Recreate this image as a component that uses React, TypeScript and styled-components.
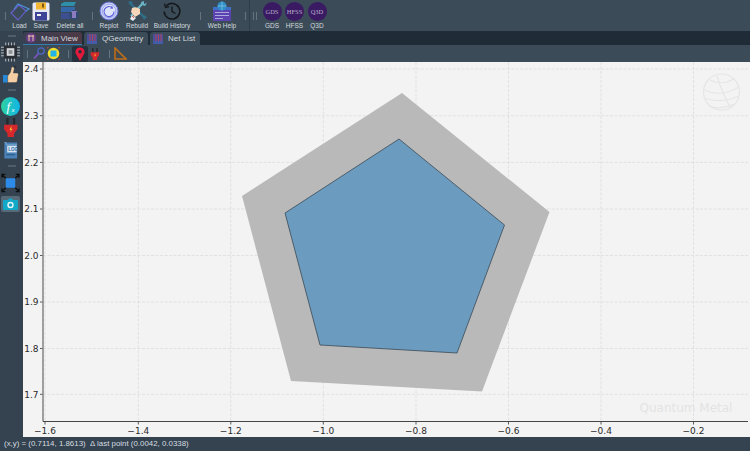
import React from 'react';
import styled, { createGlobalStyle } from 'styled-components';

const Global = createGlobalStyle`
  html, body { margin: 0; padding: 0; background: #34434f; }
  body { font-family: "Liberation Sans", Arial, sans-serif; overflow: hidden; }
`;

const Shell = styled.div`
  width: 750px; height: 451px; display: flex; flex-direction: column; overflow: hidden; background: #34434f;
`;
const TopBar = styled.div`
  height: 31px; flex: none; display: flex; align-items: flex-start; background: #3b4b58; box-sizing: border-box; padding-left: 2px;
`;
const Grip = styled.span<{ $l: number; $r: number }>`
  flex: none; width: 1px; height: 8px; margin: 12px ${p => p.$r}px 0 ${p => p.$l}px;
  background: #66747f;
`;
const DoubleGrip = styled.span`
  flex: none; width: 4px; height: 8px; margin: 12px 4px 0 3px;
  border-left: 1px solid #66747f; border-right: 1px solid #66747f; box-sizing: border-box;
`;
const Divider = styled.span`
  flex: none; width: 1px; height: 31px; background: #2f3d49;
`;
const ToolItem = styled.div<{ $w: number }>`
  flex: none; width: ${p => p.$w}px; height: 31px; display: flex; flex-direction: column; align-items: center; justify-content: flex-start;
`;
const ToolIcon = styled.div`
  height: 22px; width: 100%; display: flex; align-items: center; justify-content: center;
`;
const ToolLabel = styled.span`
  font-size: 6.5px; line-height: 8px; color: #d4dade; white-space: nowrap;
`;
const Badge = styled.div`
  width: 19px; height: 19px; border-radius: 50%; background: #3a1a63; color: #b9adca;
  font-family: "Liberation Serif", serif; font-size: 6.5px; display: flex; align-items: center; justify-content: center;
`;
const Body = styled.div`
  flex: 1; display: flex; min-height: 0;
`;
const SideBar = styled.div`
  width: 23px; flex: none; display: flex; flex-direction: column; align-items: center; background: #34434f; box-sizing: border-box; padding-top: 4px;
`;
const SideHandle = styled.span<{ $mt: number }>`
  flex: none; width: 8px; height: 2px; background: #4f5e6a; margin-top: ${p => p.$mt}px;
`;
const SideIcon = styled.div<{ $h: number; $mt: number; $active?: boolean }>`
  flex: none; width: 19px; height: ${p => p.$h}px; margin-top: ${p => p.$mt}px; margin-left: -2px;
  display: flex; align-items: center; justify-content: center; border-radius: 2px;
  background: ${p => (p.$active ? '#566a78' : 'transparent')};
`;
const Main = styled.div`
  flex: 1; display: flex; flex-direction: column; min-width: 0;
`;
const TabBar = styled.div`
  height: 14px; flex: none; display: flex; gap: 2px; background: #1f2c37; box-sizing: border-box; padding-top: 1px;
`;
const Tab = styled.div<{ $w: number; $active?: boolean }>`
  flex: none; width: ${p => p.$w}px; box-sizing: border-box; padding-left: 3px; display: flex; align-items: center; gap: 5px;
  font-size: 8px; color: #d5dade; border-radius: 3px 3px 0 0;
  background: ${p => (p.$active ? 'linear-gradient(90deg,#3a3f52,#4d3a46)' : '#3b4b58')};
  border-bottom: ${p => (p.$active ? '1px solid #2f7fb5' : 'none')};
`;
const SubBar = styled.div`
  height: 17px; flex: none; display: flex; align-items: center; background: #3b4b58; padding-left: 4px; box-sizing: border-box;
`;
const SubIcon = styled.div<{ $w: number; $active?: boolean }>`
  flex: none; width: ${p => p.$w}px; height: 16px; display: flex; align-items: center; justify-content: center; border-radius: 2px;
  background: ${p => (p.$active ? '#25323d' : 'transparent')};
`;
const SubSep = styled.span<{ $l: number; $r: number }>`
  flex: none; width: 1px; height: 8px; background: #66747f; margin: 0 ${p => p.$r}px 0 ${p => p.$l}px;
`;
const PlotArea = styled.div`
  flex: 1; background: #f3f3f3; min-height: 0; display: flex;
`;
const PlotSvg = styled.svg`
  display: block; width: 727px; height: 375px;
`;
const Status = styled.div`
  height: 14px; flex: none; background: #34434f; color: #d7dce0; font-size: 7.9px; line-height: 14px; padding-left: 4px; white-space: nowrap;
`;

const Load = () => (
  <svg width="20" height="19" viewBox="0 0 20 19" fill="none" stroke="#6a5fd0" strokeWidth="1.1">
    <path d="M1 11 L9 3 L16 9 L8 18 Z" />
    <path d="M4 7 L8 2 L19 7 L16 9" stroke="#4e8fd8" />
  </svg>
);
const Save = () => (
  <svg width="18" height="19" viewBox="0 0 18 19">
    <rect x="0.5" y="0.5" width="17" height="18" rx="1.5" fill="#e6e8f2" />
    <rect x="4" y="0.5" width="10" height="7" fill="#f2b632" />
    <rect x="10" y="1.5" width="2" height="4" fill="#7a5a10" />
    <rect x="3" y="10" width="12" height="8.5" fill="#3f4596" />
    <rect x="5" y="12" width="4" height="2" fill="#f0f1f6" />
  </svg>
);
const Delete = () => (
  <svg width="20" height="20" viewBox="0 0 20 20">
    <path d="M1 3 L4 1 H16 L14 5 H1 Z" fill="#2f8fa8" />
    <rect x="1" y="6" width="14" height="5" fill="#3568a8" />
    <rect x="1" y="12" width="11" height="6" fill="#3d4f90" />
    <circle cx="14" cy="14" r="5" fill="#334a70" />
    <rect x="12" y="11" width="4" height="6" fill="#8b7cc0" />
    <rect x="11" y="10" width="6" height="1" fill="#8b7cc0" />
  </svg>
);
const Replot = () => (
  <svg width="20" height="20" viewBox="0 0 20 20" fill="none">
    <circle cx="10" cy="10" r="9" fill="#c3cdf5" stroke="#6b6fd6" strokeWidth="1" />
    <circle cx="10" cy="10" r="6.7" fill="#dfe4fb" stroke="#7f83e0" strokeWidth="0.6" />
    <path d="M13.5 7 A5 5 0 1 0 15 10.5" stroke="#5c60d8" strokeWidth="1.1" />
    <path d="M13 4.8 L14 7.8 L11 7.6 Z" fill="#5c60d8" />
  </svg>
);
const Rebuild = () => (
  <svg width="20" height="20" viewBox="0 0 20 20" fill="none">
    <path d="M3 2 L17 16" stroke="#2f6f88" strokeWidth="2.4" />
    <path d="M1 1 L3 4 L6 2 L4 0 Z M15 15 L17 19 L20 16 L17 14 Z" fill="#2f6f88" />
    <path d="M16 2 L4 15" stroke="#6ab4c6" strokeWidth="2.2" />
    <path d="M14 1 L15 4 L18 5 L20 2 L17 3 L17 0 Z" fill="#6ab4c6" />
    <path d="M5 7 Q9 5 13 8 L13 13 L8 16 L4 11 Z" fill="#f6d6b8" />
    <path d="M5 14 L9 17 L6 20 L3 18 Z" fill="#e8eef0" />
    <path d="M5 15 L7 17" stroke="#e2574c" strokeWidth="1" />
  </svg>
);
const History = () => (
  <svg width="18" height="18" viewBox="0 0 18 18" fill="none" stroke="#15191d" strokeWidth="1.6">
    <path d="M3.2 4 A7.8 7.8 0 1 1 1.2 9.5" />
    <path d="M1.5 1.5 L2.5 5.5 L6.2 4.6" strokeWidth="1.3" />
    <path d="M9 4.5 V9.5 L12.5 11.5" strokeWidth="1.4" />
  </svg>
);
const WebHelp = () => (
  <svg width="20" height="21" viewBox="0 0 20 21">
    <rect x="1" y="6" width="18" height="14" fill="#5d43b0" />
    <rect x="1" y="6" width="18" height="3" fill="#3d70c8" />
    <rect x="3" y="11" width="14" height="1" fill="#a9aae0" />
    <rect x="3" y="14" width="14" height="1" fill="#a9aae0" />
    <rect x="3" y="17" width="8" height="1" fill="#a9aae0" />
    <circle cx="10" cy="5" r="4.5" fill="#2f8fc8" />
    <path d="M5.5 5 H14.5 M10 .5 V9.5" stroke="#a8dcf0" strokeWidth="0.5" />
  </svg>
);
const Chip = () => (
  <svg width="19" height="20" viewBox="0 0 20 20">
    <rect x="3" y="3" width="14" height="14" rx="2" fill="#2a2f35" />
    <g stroke="#cfd3d6" strokeWidth="0.9">
      <path d="M5 0 V3 M8 0 V3 M11 0 V3 M14 0 V3 M5 17 V20 M8 17 V20 M11 17 V20 M14 17 V20" />
      <path d="M0 5 H3 M0 8 H3 M0 11 H3 M0 14 H3 M17 5 H20 M17 8 H20 M17 11 H20 M17 14 H20" />
    </g>
    <rect x="6" y="6" width="8" height="8" fill="#d8dadc" />
    <rect x="8" y="8" width="4" height="4" fill="#8e9398" />
  </svg>
);
const Thumb = () => (
  <svg width="16" height="19" viewBox="0 0 17 19">
    <rect x="0" y="10" width="5" height="8" fill="#2487d8" />
    <path d="M5 11 L8 7 L9 2 Q11 0 12 3 L11 8 L15.5 8 Q17 9 16 11 L15 17 Q14.500 18 13 18 L5 18 Z" fill="#f6cfa4" stroke="#3a3a3a" strokeWidth="0.4" />
    <path d="M12 0 L14 3" stroke="#222" strokeWidth="0.8" />
  </svg>
);
const Fx = () => (
  <svg width="19" height="19" viewBox="0 0 19 19">
    <defs>
      <linearGradient id="fxg" x1="0" x2="1" y1="0" y2="0">
        <stop offset="0" stopColor="#2fd2a0" />
        <stop offset="1" stopColor="#10b4e8" />
      </linearGradient>
    </defs>
    <circle cx="9.500" cy="9.500" r="9.500" fill="url(#fxg)" />
    <text x="5.500" y="14" fontFamily="Liberation Serif, serif" fontStyle="italic" fontSize="13" fill="#fff">f</text>
    <text x="10.500" y="14.500" fontFamily="Liberation Serif, serif" fontStyle="italic" fontSize="7" fill="#fff">x</text>
  </svg>
);
const Plug = ({ size = 19 }: { size?: number }) => (
  <svg width={size * 0.82} height={size} viewBox="0 0 14 17">
    <rect x="3" y="0" width="2" height="6" fill="#24282c" />
    <rect x="9" y="0" width="2" height="6" fill="#24282c" />
    <path d="M1 6 H13 V10 L10 14 V17 H4 V14 L1 10 Z" fill="#d4282c" />
    <path d="M7.800 7 L5.800 10.500 H7.300 L6.300 13 L8.600 9.600 H7.200 Z" fill="#f6d030" />
  </svg>
);
const Log = () => (
  <svg width="15" height="17" viewBox="0 0 15 18">
    <path d="M1 0.500 H14.500 V17.500 H1 Z" fill="#4a82b8" />
    <path d="M1 .5 L3 .5 V3 H14.500" fill="none" stroke="#9ac0e0" strokeWidth="0.6" />
    <rect x="4" y="4" width="10" height="7" fill="#d8e6f2" />
    <text x="5" y="9.800" fontSize="4.800" fontWeight="700" fill="#2c6aa4" fontFamily="Liberation Sans, sans-serif">LOG</text>
    <rect x="3" y="13" width="9" height="1" fill="#234f7c" />
  </svg>
);
const Expand = () => (
  <svg width="20" height="20" viewBox="0 0 20 20">
    <rect x="5" y="5" width="10" height="10" fill="#2c8ae8" />
    <g stroke="#0c0f12" strokeWidth="1.300" fill="none">
      <path d="M1 1 L5 5 M1 4.500 V1 H4.500" />
      <path d="M19 1 L15 5 M15.500 1 H19 V4.500" />
      <path d="M1 19 L5 15 M1 15.500 V19 H4.500" />
      <path d="M19 19 L15 15 M15.500 19 H19 V15.500" />
    </g>
  </svg>
);
const Camera = () => (
  <svg width="15" height="12" viewBox="0 0 15 12">
    <path d="M1 2 H5 L6 0.500 H9 L10 2 H14 Q15 2 15 3 V11 Q15 12 14 12 H1 Q0 12 0 11 V3 Q0 2 1 2 Z" fill="#12a8c8" />
    <circle cx="7.500" cy="7" r="3.200" fill="#e9f6f9" />
    <circle cx="7.500" cy="7" r="1.800" fill="#12a8c8" />
  </svg>
);
const TabGlyph = ({ tint }: { tint: 'a' | 'b' }) => (
  <svg width="10" height="10" viewBox="0 0 10 10">
    {tint === 'a' ? (
      <>
        <circle cx="5" cy="5" r="5" fill="#6a3d86" />
        <path d="M3 2 V8 M7 2 V8 M2 3 H8" stroke="#e7c9a6" strokeWidth="1" />
      </>
    ) : (
      <>
        <rect width="10" height="10" fill="#4a4f9a" />
        <path d="M3 0 V10 M5.500 0 V10 M8 0 V10" stroke="#b0455e" strokeWidth="1" />
        <rect y="7" width="10" height="3" fill="#3a60b0" opacity="0.8" />
      </>
    )}
  </svg>
);
const Zoom = () => (
  <svg width="12" height="13" viewBox="0 0 12 13" fill="none">
    <circle cx="8" cy="4" r="3.200" stroke="#4d68c8" strokeWidth="1.3" />
    <path d="M5.500 6.500 L1 11.500" stroke="#7b54c4" strokeWidth="1.800" />
  </svg>
);
const Snap = () => (
  <svg width="13" height="13" viewBox="0 0 13 13">
    <circle cx="6.500" cy="6.500" r="5.800" fill="#f2e02c" />
    <rect x="3.500" y="3.500" width="6" height="6" fill="#23b4e8" />
    <path d="M0 2 V0 H2 M11 0 H13 V2 M0 11 V13 H2 M11 13 H13 V11" stroke="#d2492e" strokeWidth="1" fill="none" />
  </svg>
);
const Pin = () => (
  <svg width="10" height="14" viewBox="0 0 10 14">
    <path d="M5 14 L1 7 A4.500 4.500 0 1 1 9 7 Z" fill="#e8173c" />
    <circle cx="5" cy="4.800" r="1.700" fill="#25323d" />
  </svg>
);
const Ruler = () => (
  <svg width="13" height="13" viewBox="0 0 13 13">
    <path d="M1 1 L12 12 H1 Z" fill="none" stroke="#c06f18" strokeWidth="1.600" />
    <path d="M1 4 H3 M1 7 H3 M1 10 H3" stroke="#8a4d10" strokeWidth="0.700" />
  </svg>
);

const X0 = 23;
const Y0 = 62;
const xs: [string, number][] = [['−1.6', 45], ['−1.4', 138.3], ['−1.2', 230.8], ['−1.0', 323.3], ['−0.8', 416], ['−0.6', 508.500], ['−0.4', 601], ['−0.2', 693.500]];
const ys: [string, number][] = [['2.4', 69], ['2.3', 115.700], ['2.2', 162.400], ['2.1', 209], ['2.0', 255.500], ['1.9', 302], ['1.8', 348.500], ['1.7', 394.300]];
const pts = (a: [number, number][]) => a.map(([x, y]) => `${x - X0},${y - Y0}`).join(' ');
const outer: [number, number][] = [[402, 93], [549.500, 212], [482, 391.500], [291, 381], [242, 196]];
const inner: [number, number][] = [[399, 139], [504.500, 225], [457, 353], [320, 345], [285, 213]];
const AX = 43 - X0;
const AY = 421.500 - Y0;
const RIGHT = 748 - X0;

const Plot = () => (
  <PlotSvg viewBox="0 0 727 375">
    {xs.map(([l, x]) => (
      <g key={l}>
        <line x1={x - X0} x2={x - X0} y1={0} y2={AY} stroke="#dcdcdc" strokeWidth="0.8" strokeDasharray="3 1.500" />
        <line x1={x - X0} x2={x - X0} y1={AY} y2={AY + 3} stroke="#333" strokeWidth="0.8" />
        <text x={x - X0} y={AY + 12.500} textAnchor="middle" fontFamily="DejaVu Sans, sans-serif" fontSize="9" fill="#2a2a2a">{l}</text>
      </g>
    ))}
    {ys.map(([l, y]) => (
      <g key={l}>
        <line x1={AX} x2={RIGHT} y1={y - Y0} y2={y - Y0} stroke="#dcdcdc" strokeWidth="0.8" strokeDasharray="3 1.500" />
        <line x1={AX - 3} x2={AX} y1={y - Y0} y2={y - Y0} stroke="#333" strokeWidth="0.8" />
        <text x={AX - 4.500} y={y - Y0 + 3.300} textAnchor="end" fontFamily="DejaVu Sans, sans-serif" fontSize="9" fill="#2a2a2a">{l}</text>
      </g>
    ))}
    <polygon points={pts(outer)} fill="#b9b9b9" />
    <polygon points={pts(inner)} fill="#6b9bbe" stroke="#3b4a55" strokeWidth="0.8" />
    <line x1={AX} x2={AX} y1={0} y2={AY} stroke="#8a8a8a" strokeWidth="1.600" />
    <line x1={AX} x2={RIGHT} y1={AY} y2={AY} stroke="#444" strokeWidth="1" />
    <g fill="none" stroke="#e6e6e6" strokeWidth="1.200" transform="translate(680,12)">
      <circle cx="18.500" cy="18" r="18" />
      <path d="M7 6 Q18 12 31 5 M1 16 Q18 24 36 13 M1 24 Q18 30 36 22 M6 32 Q18 36 31 30 M14 2 Q18 16 27 33" />
    </g>
    <text x="616.500" y="349.500" fontFamily="DejaVu Sans, sans-serif" fontSize="12" fill="#e3e3e3">Quantum Metal</text>
  </PlotSvg>
);

const App: React.FC = () => (
  <Shell>
    <Global />
    <TopBar>
      <Grip $l={3} $r={3} />
      <ToolItem $w={21}><ToolIcon><Load /></ToolIcon><ToolLabel>Load</ToolLabel></ToolItem>
      <ToolItem $w={22}><ToolIcon><Save /></ToolIcon><ToolLabel>Save</ToolLabel></ToolItem>
      <ToolItem $w={36}><ToolIcon><Delete /></ToolIcon><ToolLabel>Delete all</ToolLabel></ToolItem>
      <Grip $l={4} $r={5} />
      <ToolItem $w={22}><ToolIcon><Replot /></ToolIcon><ToolLabel>Replot</ToolLabel></ToolItem>
      <ToolItem $w={34}><ToolIcon><Rebuild /></ToolIcon><ToolLabel>Rebuild</ToolLabel></ToolItem>
      <ToolItem $w={36}><ToolIcon><History /></ToolIcon><ToolLabel>Build History</ToolLabel></ToolItem>
      <Grip $l={10} $r={11} />
      <ToolItem $w={20}><ToolIcon><WebHelp /></ToolIcon><ToolLabel>Web Help</ToolLabel></ToolItem>
      <Grip $l={13} $r={3} />
      <Divider />
      <DoubleGrip />
      <ToolItem $w={22}><ToolIcon><Badge>GDS</Badge></ToolIcon><ToolLabel>GDS</ToolLabel></ToolItem>
      <ToolItem $w={23}><ToolIcon><Badge>HFSS</Badge></ToolIcon><ToolLabel>HFSS</ToolLabel></ToolItem>
      <ToolItem $w={22}><ToolIcon><Badge>Q3D</Badge></ToolIcon><ToolLabel>Q3D</ToolLabel></ToolItem>
    </TopBar>
    <Body>
      <SideBar>
        <SideHandle $mt={0} />
        <SideIcon $h={20} $mt={5}><Chip /></SideIcon>
        <SideIcon $h={19} $mt={3}><Thumb /></SideIcon>
        <SideHandle $mt={5} />
        <SideIcon $h={19} $mt={6}><Fx /></SideIcon>
        <SideIcon $h={19} $mt={2}><Plug /></SideIcon>
        <SideIcon $h={16} $mt={5}><Log /></SideIcon>
        <SideHandle $mt={7} />
        <SideIcon $h={21} $mt={5}><Expand /></SideIcon>
        <SideIcon $h={16} $mt={3} $active><Camera /></SideIcon>
      </SideBar>
      <Main>
        <TabBar>
          <Tab $w={59} $active><TabGlyph tint="a" />Main View</Tab>
          <Tab $w={64}><TabGlyph tint="b" />QGeometry</Tab>
          <Tab $w={50}><TabGlyph tint="b" />Net List</Tab>
        </TabBar>
        <SubBar>
          <SubSep $l={0} $r={4} />
          <SubIcon $w={14}><Zoom /></SubIcon>
          <SubIcon $w={15}><Snap /></SubIcon>
          <SubSep $l={7} $r={3} />
          <SubIcon $w={16} $active><Pin /></SubIcon>
          <SubIcon $w={14}><Plug size={12} /></SubIcon>
          <SubSep $l={7} $r={3} />
          <SubIcon $w={14}><Ruler /></SubIcon>
        </SubBar>
        <PlotArea><Plot /></PlotArea>
      </Main>
    </Body>
    <Status>(x,y) = (0.7114, 1.8613)&nbsp; Δ last point (0.0042, 0.0338)</Status>
  </Shell>
);

export default App;
